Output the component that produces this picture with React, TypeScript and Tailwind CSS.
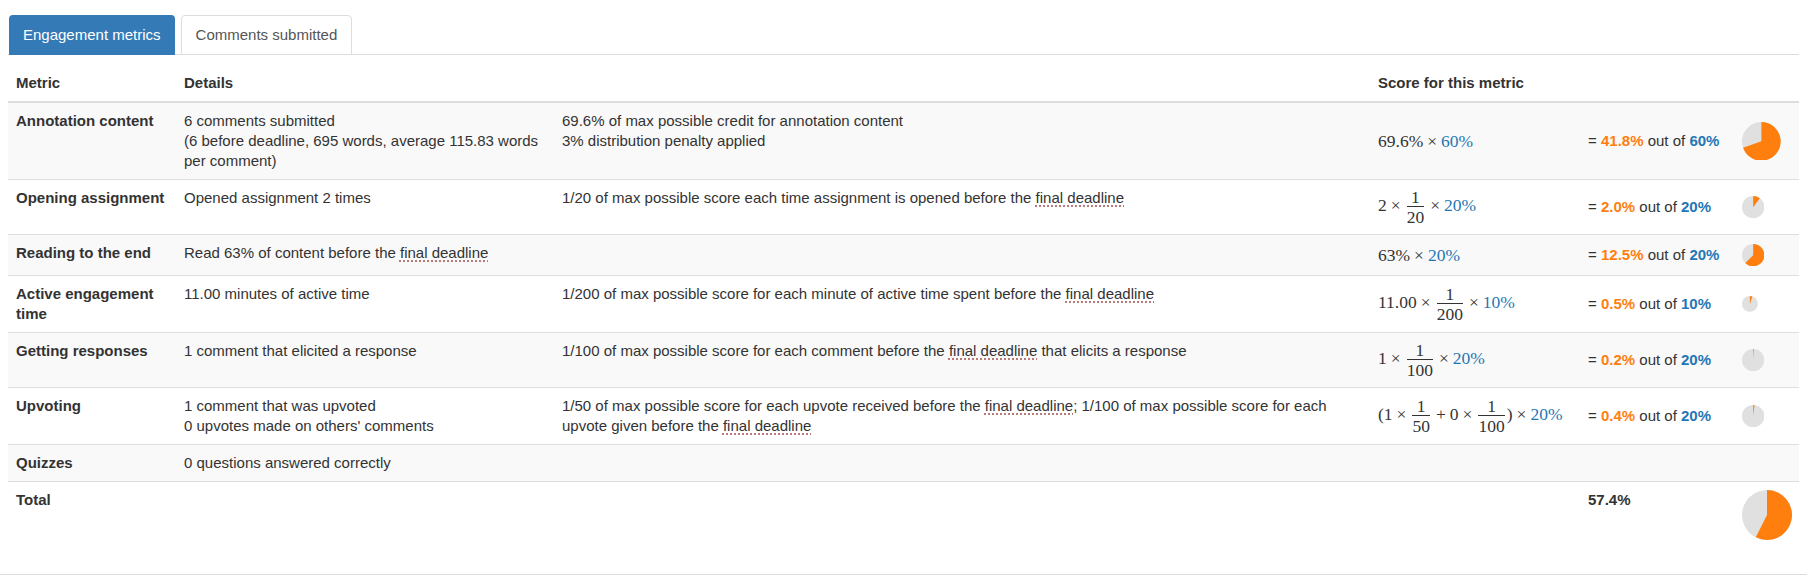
import React from 'react';

type Row = {
  label: React.ReactNode;
  details: React.ReactNode;
  rule: React.ReactNode;
  math?: React.ReactNode;
  score?: string;
  max?: number;
};

const Deadline = () => (
  <span className="underline decoration-dotted decoration-[#a0524f] underline-offset-[3px]">final deadline</span>
);

const X = () => <span className="mx-[4px]">×</span>;
const Blue = ({ children }: { children: React.ReactNode }) => <span className="text-[#1f77b4]">{children}</span>;

const Frac = ({ n, d }: { n: string; d: string }) => (
  <span className="mx-[2px] inline-flex flex-col items-center align-middle">
    <span className="px-[2px] leading-[18px]">{n}</span>
    <span className="w-full border-t border-[#333] pt-[1px] text-center leading-[18px]">{d}</span>
  </span>
);

const Pie = ({ frac, max }: { frac: number; max: number }) => {
  const size = 5 * Math.sqrt(max);
  const r = size / 2;
  const a = frac * 2 * Math.PI;
  const x = r + r * Math.sin(a);
  const y = r - r * Math.cos(a);
  const large = frac > 0.5 ? 1 : 0;
  return (
    <svg width={size} height={size} viewBox={`0 0 ${size} ${size}`} className="block">
      <circle cx={r} cy={r} r={r} fill="#e0e0e0" />
      <path d={`M ${r} ${r} L ${r} 0 A ${r} ${r} 0 ${large} 1 ${x} ${y} Z`} fill="#ff7f0e" />
    </svg>
  );
};

const rows: Row[] = [
  {
    label: 'Annotation content',
    details: (
      <>
        <div>6 comments submitted</div>
        <div>(6 before deadline, 695 words, average 115.83 words</div>
        <div>per comment)</div>
      </>
    ),
    rule: (
      <>
        <div>69.6% of max possible credit for annotation content</div>
        <div>3% distribution penalty applied</div>
      </>
    ),
    math: (
      <>
        69.6%<X />
        <Blue>60%</Blue>
      </>
    ),
    score: '41.8%',
    max: 60
  },
  {
    label: 'Opening assignment',
    details: 'Opened assignment 2 times',
    rule: (
      <>
        1/20 of max possible score each time assignment is opened before the <Deadline />
      </>
    ),
    math: (
      <>
        2<X />
        <Frac n="1" d="20" />
        <X />
        <Blue>20%</Blue>
      </>
    ),
    score: '2.0%',
    max: 20
  },
  {
    label: 'Reading to the end',
    details: (
      <>
        Read 63% of content before the <Deadline />
      </>
    ),
    rule: null,
    math: (
      <>
        63%<X />
        <Blue>20%</Blue>
      </>
    ),
    score: '12.5%',
    max: 20
  },
  {
    label: (
      <>
        <div>Active engagement</div>
        <div>time</div>
      </>
    ),
    details: '11.00 minutes of active time',
    rule: (
      <>
        1/200 of max possible score for each minute of active time spent before the <Deadline />
      </>
    ),
    math: (
      <>
        11.00<X />
        <Frac n="1" d="200" />
        <X />
        <Blue>10%</Blue>
      </>
    ),
    score: '0.5%',
    max: 10
  },
  {
    label: 'Getting responses',
    details: '1 comment that elicited a response',
    rule: (
      <>
        1/100 of max possible score for each comment before the <Deadline /> that elicits a response
      </>
    ),
    math: (
      <>
        1<X />
        <Frac n="1" d="100" />
        <X />
        <Blue>20%</Blue>
      </>
    ),
    score: '0.2%',
    max: 20
  },
  {
    label: 'Upvoting',
    details: (
      <>
        <div>1 comment that was upvoted</div>
        <div>0 upvotes made on others' comments</div>
      </>
    ),
    rule: (
      <>
        <div>
          1/50 of max possible score for each upvote received before the <Deadline />; 1/100 of max possible score for each
        </div>
        <div>
          upvote given before the <Deadline />
        </div>
      </>
    ),
    math: (
      <>
        (1<X />
        <Frac n="1" d="50" />
        <span className="mx-[4px]">+</span>0<X />
        <Frac n="1" d="100" />
        )<X />
        <Blue>20%</Blue>
      </>
    ),
    score: '0.4%',
    max: 20
  },
  {
    label: 'Quizzes',
    details: '0 questions answered correctly',
    rule: null
  }
];

export default function App() {
  return (
    <div className="min-h-[585px] bg-white font-['Liberation_Sans',Arial,sans-serif] text-[15px] leading-5 text-[#333]">
      <div className="border-b border-[#ddd] pb-[26px] pt-[15px]">
        <div className="px-2">
          <div className="flex gap-[6px] border-b border-[#ddd] pl-px">
            <button className="-mb-px rounded-t-[4px] bg-[#337ab7] px-[14px] py-[10px] text-white">Engagement metrics</button>
            <button className="-mb-px rounded-t-[4px] border border-[#ddd] bg-white px-[14px] py-[9px] text-[#555]">
              Comments submitted
            </button>
          </div>
          <table className="mt-[10px] w-full table-fixed border-collapse text-left">
            <colgroup>
              <col className="w-[168px]" />
              <col className="w-[378px]" />
              <col className="w-[816px]" />
              <col className="w-[210px]" />
              <col className="w-[154px]" />
              <col />
            </colgroup>
            <thead>
              <tr className="border-b-2 border-[#ddd]">
                <th className="p-2 align-bottom font-bold">Metric</th>
                <th colSpan={2} className="p-2 align-bottom font-bold">
                  Details
                </th>
                <th colSpan={2} className="p-2 align-bottom font-bold">
                  Score for this metric
                </th>
                <th className="p-2" />
              </tr>
            </thead>
            <tbody>
              {rows.map((row, i) => (
                <tr key={i} className={`border-t border-[#ddd] ${i % 2 === 0 ? 'bg-[#f9f9f9]' : 'bg-white'}`}>
                  <td className="p-2 align-top font-bold">{row.label}</td>
                  <td className="p-2 align-top">{row.details}</td>
                  <td className="p-2 align-top">{row.rule}</td>
                  <td className="whitespace-nowrap p-2 align-middle font-['Liberation_Serif','Times_New_Roman',serif] text-[17.5px] leading-6">
                    {row.math}
                  </td>
                  <td className="whitespace-nowrap p-2 align-middle">
                    {row.score && (
                      <>
                        = <span className="font-bold text-[#ff7f0e]">{row.score}</span> out of{' '}
                        <span className="font-bold text-[#1f77b4]">{row.max}%</span>
                      </>
                    )}
                  </td>
                  <td className="p-2 align-middle">
                    {row.score && row.max && <Pie frac={parseFloat(row.score) / row.max} max={row.max} />}
                  </td>
                </tr>
              ))}
              <tr className="border-t border-[#ddd] bg-white">
                <td className="p-2 align-top font-bold">Total</td>
                <td className="p-2" />
                <td className="p-2" />
                <td className="p-2" />
                <td className="p-2 align-top font-bold">57.4%</td>
                <td className="p-2 align-top">
                  <Pie frac={0.574} max={100} />
                </td>
              </tr>
            </tbody>
          </table>
        </div>
      </div>
    </div>
  );
}
